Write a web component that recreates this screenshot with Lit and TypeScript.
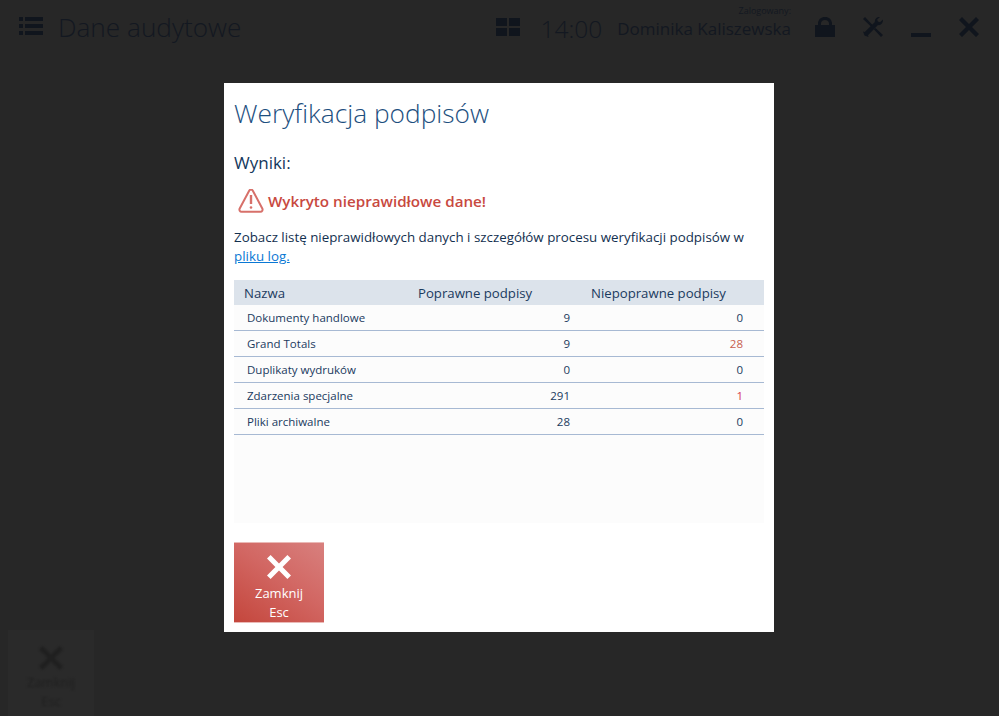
import { css, html, LitElement, svg } from "lit";
import { customElement } from "lit/decorators.js";

interface SignatureRow {
  name: string;
  valid: number;
  invalid: number;
  invalidTone?: "warn" | "bad";
}

const ROWS: SignatureRow[] = [
  { name: "Dokumenty handlowe", valid: 9, invalid: 0 },
  { name: "Grand Totals", valid: 9, invalid: 28, invalidTone: "warn" },
  { name: "Duplikaty wydruków", valid: 0, invalid: 0 },
  { name: "Zdarzenia specjalne", valid: 291, invalid: 1, invalidTone: "bad" },
  { name: "Pliki archiwalne", valid: 28, invalid: 0 },
];

const closeIcon = svg`<path d="M3.600 0 12 8.400 20.400 0 24 3.600 15.600 12 24 20.400 20.400 24 12 15.600 3.600 24 0 20.400 8.400 12 0 3.600z" />`;

@customElement("app-root")
export class AppRoot extends LitElement {
  private _renderHeader() {
    return html`<header class="topbar">
      <svg class="ico menu" viewBox="0 0 24 18">
        <path d="M0 0h4v4H0zM6 0h18v4H6zM0 7h4v4H0zM6 7h18v4H6zM0 14h4v4H0zM6 14h18v4H6z" />
      </svg>
      <div class="page-title">Dane audytowe</div>
      <svg class="ico tiles" viewBox="0 0 24 18">
        <path d="M0 0h11v8H0zM13 0h11v8H13zM0 10h11v8H0zM13 10h11v8H13z" />
      </svg>
      <div class="clock">14:00</div>
      <div class="user">
        <span class="user-label">Zalogowany:</span>
        <span class="user-name">Dominika Kaliszewska</span>
      </div>
      <svg class="ico lock" viewBox="0 0 20 20">
        <path fill-rule="evenodd" d="M3 8V6.500C3 2.700 6 0 10 0s7 2.700 7 6.500V8h3v12H0V8zM6 8h8V6.500C14 4.300 12.300 3 10 3S6 4.300 6 6.500z" />
      </svg>
      <svg class="ico tools" viewBox="0 0 20 20">
        <path d="M0 2 2 0 10 8.500 8.500 10zM11 12.500 12.500 11 20 18 18 20z" />
        <path d="M19.800 2.400 17 5.200 14.800 4.600 14.200 2.400 17 0C14 -.5 11.300 2 11.900 5L1.800 15 0 14.500 1.500 18.500 5.500 20 5 18.200 15 8.100C18 8.700 20.500 5.500 19.800 2.400z" />
      </svg>
      <svg class="ico minimize" viewBox="0 0 20 20"><path d="M0 16h20v4H0z" /></svg>
      <svg class="ico close" viewBox="0 0 24 24">${closeIcon}</svg>
    </header>`;
  }

  private _renderRow(row: SignatureRow) {
    return html`<div class="row">
      <div class="cell name">${row.name}</div>
      <div class="cell valid">${row.valid}</div>
      <div class="cell invalid ${row.invalidTone ?? ""}">${row.invalid}</div>
    </div>`;
  }

  protected override render() {
    return html`
      ${this._renderHeader()}
      <div class="spacer"></div>
      <footer class="bottombar">
        <div class="ghost-btn">
          <svg class="ghost-ico" viewBox="0 0 24 24">${closeIcon}</svg>
          <span>Zamknij</span>
          <span>Esc</span>
        </div>
      </footer>

      <section class="dialog">
        <h1>Weryfikacja podpisów</h1>
        <h2>Wyniki:</h2>
        <div class="alert">
          <svg class="alert-ico" viewBox="0 1 26 25">
            <path class="tri" d="M13 1.500c-.7 0-1.300.4-1.700 1L1.700 20.500c-.8 1.500.2 3.300 1.900 3.300h18.800c1.700 0 2.700-1.800 1.900-3.300L14.700 2.500c-.4-.6-1-1-1.700-1z" />
            <path class="mark" d="M13 7v9" />
            <circle class="dot" cx="13" cy="19.500" r="1.300" />
          </svg>
          <span>Wykryto nieprawidłowe dane!</span>
        </div>
        <p class="info">
          Zobacz listę nieprawidłowych danych i szczegółów procesu weryfikacji
          podpisów w <a href="#">pliku log.</a>
        </p>
        <div class="grid">
          <div class="row head">
            <div class="cell">Nazwa</div>
            <div class="cell">Poprawne podpisy</div>
            <div class="cell">Niepoprawne podpisy</div>
          </div>
          ${ROWS.map((row) => this._renderRow(row))}
        </div>
        <div class="actions">
          <button class="close-btn">
            <svg viewBox="0 0 24 24">${closeIcon}</svg>
            <span>Zamknij</span>
            <span>Esc</span>
          </button>
        </div>
      </section>
    `;
  }

  static styles = css`
    :host {
      display: flex;
      flex-direction: column;
      position: relative;
      width: 999px;
      height: 716px;
      overflow: hidden;
      background: #272727;
      font-family: "Open Sans", "Noto Sans", sans-serif;
      color: #13304f;
    }

    .topbar {
      display: flex;
      align-items: flex-start;
      height: 56px;
      color: #131821;
    }

    .ico {
      flex: none;
      fill: #10151d;
    }

    .menu {
      width: 24px;
      height: 18px;
      margin: 17px 0 0 19px;
    }

    .page-title {
      flex: 1;
      margin: 8px 0 0 15px;
      font-size: 26.200px;
      line-height: 38px;
      font-weight: 300;
    }

    .tiles {
      width: 24px;
      height: 18px;
      margin: 18px 0 0 6px;
    }

    .clock {
      margin: 10px 0 0 20px;
      font-size: 24.500px;
      line-height: 38px;
      font-weight: 300;
    }

    .user {
      display: flex;
      flex-direction: column;
      align-items: flex-end;
      margin: 5px 0 0 15px;
    }

    .user-label {
      font-size: 9px;
      line-height: 12px;
    }

    .user-name {
      font-size: 17px;
      line-height: 24px;
    }

    .lock {
      width: 20px;
      height: 20px;
      margin: 17px 0 0 24px;
    }

    .tools {
      width: 20px;
      height: 20px;
      margin: 17px 0 0 28px;
    }

    .minimize {
      width: 20px;
      height: 20px;
      margin: 17px 0 0 28px;
    }

    .close {
      width: 20px;
      height: 20px;
      margin: 17px 20px 0 28px;
    }

    .spacer {
      flex: 1;
    }

    .bottombar {
      display: flex;
      padding-left: 8px;
    }

    .ghost-btn {
      display: flex;
      flex-direction: column;
      align-items: center;
      width: 86px;
      height: 86px;
      background: #2a2a2a;
      color: #202020;
      font-size: 13px;
      line-height: 19px;
    }

    .ghost-btn > * {
      filter: blur(1px);
    }

    .ghost-ico {
      width: 24px;
      height: 24px;
      margin: 16px 0 3px;
      fill: #202020;
    }

    .dialog {
      position: absolute;
      left: 224px;
      top: 83px;
      box-sizing: border-box;
      width: 550px;
      height: 549px;
      padding: 0 10px;
      background: #fff;
    }

    h1 {
      margin: 11px 0 0;
      font-size: 26.300px;
      line-height: 38px;
      font-weight: 300;
      color: #1d4f80;
    }

    h2 {
      margin: 19px 0 0;
      font-size: 17px;
      line-height: 24px;
      font-weight: 400;
      color: #13375c;
    }

    .alert {
      display: flex;
      align-items: center;
      gap: 4px;
      margin: 13px 0 0 4px;
      height: 26px;
      font-size: 15.200px;
      font-weight: 600;
      color: #c8493f;
    }

    .alert-ico {
      width: 26px;
      height: 25px;
    }

    .tri {
      fill: none;
      stroke: #d7706a;
      stroke-width: 2;
    }

    .mark {
      fill: none;
      stroke: #d7706a;
      stroke-width: 2.400;
    }

    .dot {
      fill: #d7706a;
    }

    .info {
      margin: 14px 0 0;
      font-size: 13.350px;
      line-height: 19px;
      color: #13304f;
    }

    .info a {
      color: #0a78d4;
    }

    .grid {
      height: 243px;
      margin-top: 14px;
      background: #fcfcfc;
      font-size: 11.500px;
      color: #1a3a5e;
    }

    .row {
      display: grid;
      grid-template-columns: 174px 172px 1fr;
      box-sizing: border-box;
      height: 26px;
      border-bottom: 1px solid #a7b9d3;
      align-items: center;
    }

    .row.head {
      height: 25px;
      border-bottom: 0;
      background: #dce3eb;
      font-size: 13.200px;
    }

    .head .cell {
      padding: 0 0 0 10px;
      text-align: left;
    }

    .head .cell:last-child {
      padding-left: 11px;
    }

    .cell.name {
      padding-left: 13px;
    }

    .cell.valid {
      padding-right: 10px;
      text-align: right;
    }

    .cell.invalid {
      padding-right: 21px;
      text-align: right;
    }

    .cell.warn {
      color: #c8604f;
    }

    .cell.bad {
      color: #d83a4e;
    }

    .actions {
      margin-top: 19px;
    }

    .close-btn {
      display: flex;
      flex-direction: column;
      align-items: center;
      box-sizing: border-box;
      width: 90px;
      height: 81px;
      padding: 0;
      border: 0;
      border-top: 1px solid #eab9b6;
      border-bottom: 1px solid #eab9b6;
      background: linear-gradient(35deg, #c4463c 0%, #d26763 55%, #d8807e 100%);
      color: #fff;
      font-family: inherit;
      font-size: 13px;
      line-height: 19px;
    }

    .close-btn svg {
      width: 24px;
      height: 24px;
      margin: 12px 0 5px;
      fill: #fff;
    }
  `;
}
